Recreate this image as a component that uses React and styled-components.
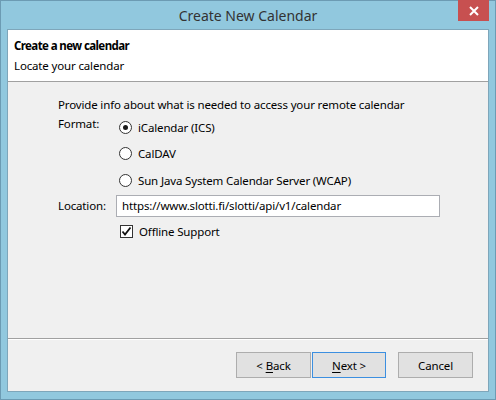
import React from "react";
import styled, { createGlobalStyle } from "styled-components";

const Global = createGlobalStyle`
  html, body { margin: 0; padding: 0; background: #ffffff; }
  body { font-family: "Noto Sans", "Open Sans", sans-serif; }
  * { box-sizing: border-box; }
`;

const Window = styled.div`
  width: 496px;
  height: 400px;
  background: #91c8de;
  border: 1px solid #6c9bb3;
  display: flex;
  flex-direction: column;
  padding: 0 6px 7px 6px;
`;

const TitleBar = styled.div`
  position: relative;
  height: 28px;
  display: flex;
  align-items: center;
  justify-content: center;
  font-size: 14px;
  color: #333333;
  padding-top: 1px;
`;

const Close = styled.div`
  position: absolute;
  right: 0;
  top: -1px;
  width: 31px;
  height: 21px;
  background: #c75050;
  display: flex;
  align-items: center;
  justify-content: center;
`;

const Client = styled.div`
  flex: 1;
  border: 1px solid #7ea6ba;
  background: #f0f0f0;
  display: flex;
  flex-direction: column;
`;

const Header = styled.div`
  height: 52px;
  background: #ffffff;
  border-bottom: 1px solid #a0a0a0;
  padding: 6px 0 0 6px;
  font-size: 11.5px;
  letter-spacing: -0.15px;
  color: #000;
`;

const HeadTitle = styled.div`
  font-weight: bold;
  letter-spacing: -0.6px;
  height: 20px;
  line-height: 20px;
`;

const HeadSub = styled.div`
  height: 20px;
  line-height: 20px;
`;

const Body = styled.div`
  flex: 1;
  padding: 14px 0 0 50px;
  font-size: 11.5px;
  letter-spacing: -0.15px;
  color: #000;
  display: flex;
  flex-direction: column;
`;

const Intro = styled.div`
  height: 18px;
  line-height: 18px;
  margin-bottom: 4px;
`;

const Row = styled.div`
  display: flex;
  align-items: ${(p) => (p.$center ? "center" : "flex-start")};
  margin-top: ${(p) => p.$mt || "0"};
  padding-left: ${(p) => p.$pl || "0"};
`;

const Label = styled.div`
  width: 58px;
  line-height: 18px;
  margin-top: ${(p) => p.$mt || "0"};
`;

const Options = styled.div`
  display: flex;
  flex-direction: column;
  gap: 8.5px;
  padding-left: 3px;
`;

const Option = styled.div`
  display: flex;
  align-items: center;
  gap: 6px;
  height: 18px;
`;

const Radio = styled.span`
  width: 13px;
  height: 13px;
  border-radius: 50%;
  border: 1px solid #333;
  background: #fff;
  display: flex;
  align-items: center;
  justify-content: center;
  &::after {
    content: "";
    width: 5px;
    height: 5px;
    border-radius: 50%;
    background: ${(p) => (p.$on ? "#1a1a1a" : "transparent")};
  }
`;

const Input = styled.div`
  width: 324px;
  height: 22px;
  border: 1px solid #abadb3;
  background: #fff;
  padding: 0 5px;
  line-height: 20px;
`;

const Check = styled.span`
  width: 13px;
  height: 13px;
  border: 1px solid #333;
  background: #fff;
  display: flex;
  align-items: center;
  justify-content: center;
`;

const Footer = styled.div`
  height: 53px;
  border-top: 1px solid #a0a0a0;
  box-shadow: inset 0 1px 0 #ffffff;
  display: flex;
  justify-content: flex-end;
  align-items: flex-start;
  padding: 13px 15px 0 0;
`;

const Button = styled.div`
  width: ${(p) => p.$w || "75px"};
  height: 26px;
  border: 1px solid ${(p) => (p.$primary ? "#3c8fe0" : "#adadad")};
  background: #e1e1e1;
  font-size: 11.5px;
  letter-spacing: -0.15px;
  display: flex;
  align-items: center;
  justify-content: center;
  margin-left: ${(p) => p.$ml || "0"};
  color: #000;
  white-space: pre;
  u { text-decoration: underline; text-underline-offset: 2px; }
`;

export default function App() {
  return (
    <>
      <Global />
      <Window>
        <TitleBar>
          Create New Calendar
          <Close>
            <svg width="10" height="10" viewBox="0 0 10 10">
              <path d="M1 1 L9 9 M9 1 L1 9" stroke="#fff" strokeWidth="2" />
            </svg>
          </Close>
        </TitleBar>
        <Client>
          <Header>
            <HeadTitle>Create a new calendar</HeadTitle>
            <HeadSub>Locate your calendar</HeadSub>
          </Header>
          <Body>
            <Intro>Provide info about what is needed to access your remote calendar</Intro>
            <Row>
              <Label $mt="-3px">Format:</Label>
              <Options>
                <Option><Radio $on />iCalendar (ICS)</Option>
                <Option><Radio />CalDAV</Option>
                <Option><Radio />Sun Java System Calendar Server (WCAP)</Option>
              </Options>
            </Row>
            <Row $center $mt="6px">
              <Label>Location:</Label>
              <Input>https://www.slotti.fi/slotti/api/v1/calendar</Input>
            </Row>
            <Row $mt="5px" $pl="62px">
              <Option>
                <Check>
                  <svg width="11" height="11" viewBox="0 0 11 11">
                    <path d="M1.5 5.5 L4 8.5 L9.5 1.5" fill="none" stroke="#111" strokeWidth="1.8" />
                  </svg>
                </Check>
                Offline Support
              </Option>
            </Row>
          </Body>
          <Footer>
            <Button><span>{"< "}<u>B</u>ack</span></Button>
            <Button $primary $ml="1px" $w="74px">
              <span><u>N</u>{"ext >"}</span>
            </Button>
            <Button $ml="12px">Cancel</Button>
          </Footer>
        </Client>
      </Window>
    </>
  );
}
